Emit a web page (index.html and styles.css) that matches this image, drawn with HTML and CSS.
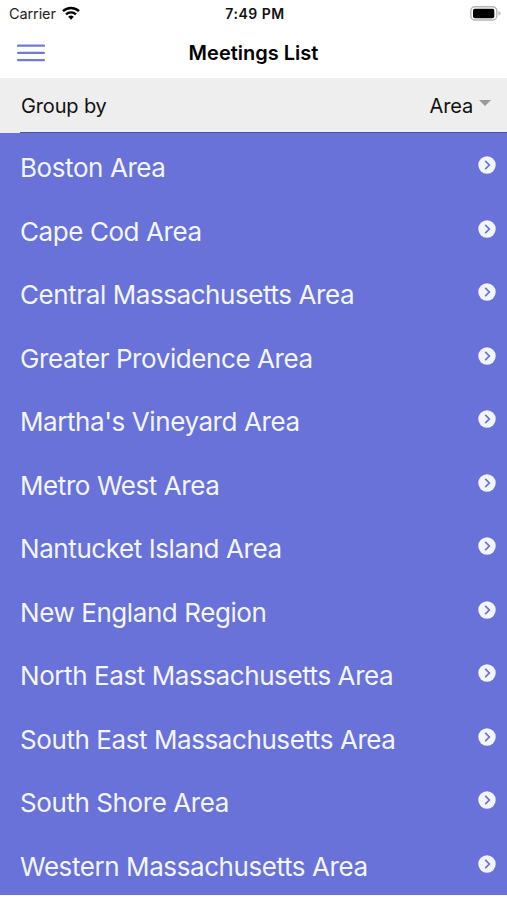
FILE: index.html
```
<!DOCTYPE html>
<html lang="en">
<head>
    <meta charset="UTF-8">
    <meta name="viewport" content="width=device-width, initial-scale=1.0">
    <title>Meetings List</title>
    <link rel="stylesheet" href="styles.css">
</head>
<body>
    <!-- shared row icon -->
    <svg class="icon-defs" width="0" height="0">
        <symbol id="arrow" viewBox="0 0 18 18">
            <circle cx="9" cy="9" r="8.7" fill="#f4f6ff"/>
            <path d="M7.2 4.9 L11.3 9 L7.2 13.1" fill="none" stroke="#6872d9" stroke-width="1.7"/>
        </symbol>
    </svg>

    <div class="status-bar">
        <div class="carrier">
            <span>Carrier</span>
            <svg class="wifi" viewBox="0 0 18 14" width="18" height="14">
                <path d="M1 5.2 A11.5 11.5 0 0 1 17 5.2" fill="none" stroke="#000" stroke-width="2.5"/>
                <path d="M4 8.3 A7.2 7.2 0 0 1 14 8.3" fill="none" stroke="#000" stroke-width="2.3"/>
                <path d="M6.2 10.8 A4 4 0 0 1 11.8 10.8 L9 13.7 Z" fill="#000"/>
            </svg>
        </div>
        <div class="time">7:49 PM</div>
        <svg class="battery" viewBox="0 0 31 15" width="31" height="15">
            <rect x="0.8" y="0.8" width="26" height="13.2" rx="4" fill="#fff" stroke="#b5b5b5" stroke-width="1.4"/>
            <rect x="3" y="2.8" width="21.3" height="9.4" rx="2" fill="#000"/>
            <path d="M28.5 5 Q30.6 6 30.6 7.4 Q30.6 8.8 28.5 9.8 Z" fill="#b5b5b5"/>
        </svg>
    </div>

    <div class="toolbar">
        <svg class="menu-button" viewBox="0 0 28 18" width="28" height="18">
            <path d="M1 1.7 H27 M1 8.9 H27 M1 16.1 H27" stroke="#7479d4" stroke-width="2.3" stroke-linecap="round"/>
        </svg>
        <h1 class="title">Meetings List</h1>
    </div>

    <div class="group-by">
        <span class="group-label">Group by</span>
        <span class="group-value">Area</span>
        <span class="caret"></span>
    </div>

    <ul class="area-list">
        <li><span>Boston Area</span><svg><use href="#arrow"/></svg></li>
        <li><span>Cape Cod Area</span><svg><use href="#arrow"/></svg></li>
        <li><span>Central Massachusetts Area</span><svg><use href="#arrow"/></svg></li>
        <li><span>Greater Providence Area</span><svg><use href="#arrow"/></svg></li>
        <li><span>Martha's Vineyard Area</span><svg><use href="#arrow"/></svg></li>
        <li><span>Metro West Area</span><svg><use href="#arrow"/></svg></li>
        <li><span>Nantucket Island Area</span><svg><use href="#arrow"/></svg></li>
        <li><span>New England Region</span><svg><use href="#arrow"/></svg></li>
        <li><span>North East Massachusetts Area</span><svg><use href="#arrow"/></svg></li>
        <li><span>South East Massachusetts Area</span><svg><use href="#arrow"/></svg></li>
        <li><span>South Shore Area</span><svg><use href="#arrow"/></svg></li>
        <li><span>Western Massachusetts Area</span><svg><use href="#arrow"/></svg></li>
    </ul>
</body>
</html>
```

FILE: styles.css
```
* {
    margin: 0;
    padding: 0;
    box-sizing: border-box;
}

body {
    background: #fff;
    color: #111;
    font-family: Inter, Roboto, sans-serif;
    height: 100vh;
    overflow: hidden;
}

.icon-defs {
    display: block;
}

/* Status bar */
.status-bar {
    display: grid;
    grid-template-columns: 1fr auto 1fr;
    align-items: center;
    height: 27px;
    padding: 0 6px 0 9px;
}

.carrier {
    display: flex;
    align-items: center;
    gap: 6px;
    font-size: 14.5px;
    letter-spacing: -0.1px;
    color: #222;
}

.wifi {
    margin-bottom: 2px;
}

.time {
    font-size: 14px;
    font-weight: 600;
    letter-spacing: 0.5px;
}

.battery {
    justify-self: end;
}

/* Toolbar */
.toolbar {
    display: grid;
    grid-template-columns: 1fr auto 1fr;
    align-items: center;
    height: 51px;
    padding: 0 16px;
}

.menu-button {
    margin-left: 1px;
}

.title {
    font-size: 20px;
    font-weight: 600;
    color: #000;
}

/* Group by select */
.group-by {
    display: flex;
    align-items: center;
    height: 55px;
    padding: 0 16px 0 21px;
    background: linear-gradient(#4c53a0, #4c53a0) 20px 100% / 100% 1px no-repeat #eee;
    font-size: 20px;
    letter-spacing: -0.15px;
}

.group-label {
    flex: 1;
}

.caret {
    margin: 0 0 6px 6px;
    border: 6px solid transparent;
    border-top-color: #999;
    border-bottom: 0;
}

/* List */
.area-list {
    list-style: none;
    background: #6872d9;
}

.area-list li {
    display: flex;
    align-items: center;
    justify-content: space-between;
    height: 63.5px;
    padding: 0 11px 0 20px;
    color: #f4f6ff;
    font-size: 26px;
    font-weight: 425;
    letter-spacing: -0.42px;
}

.area-list span {
    padding-top: 6px;
}

.area-list svg {
    width: 18px;
    height: 18px;
    margin-top: 1px;
}
```
